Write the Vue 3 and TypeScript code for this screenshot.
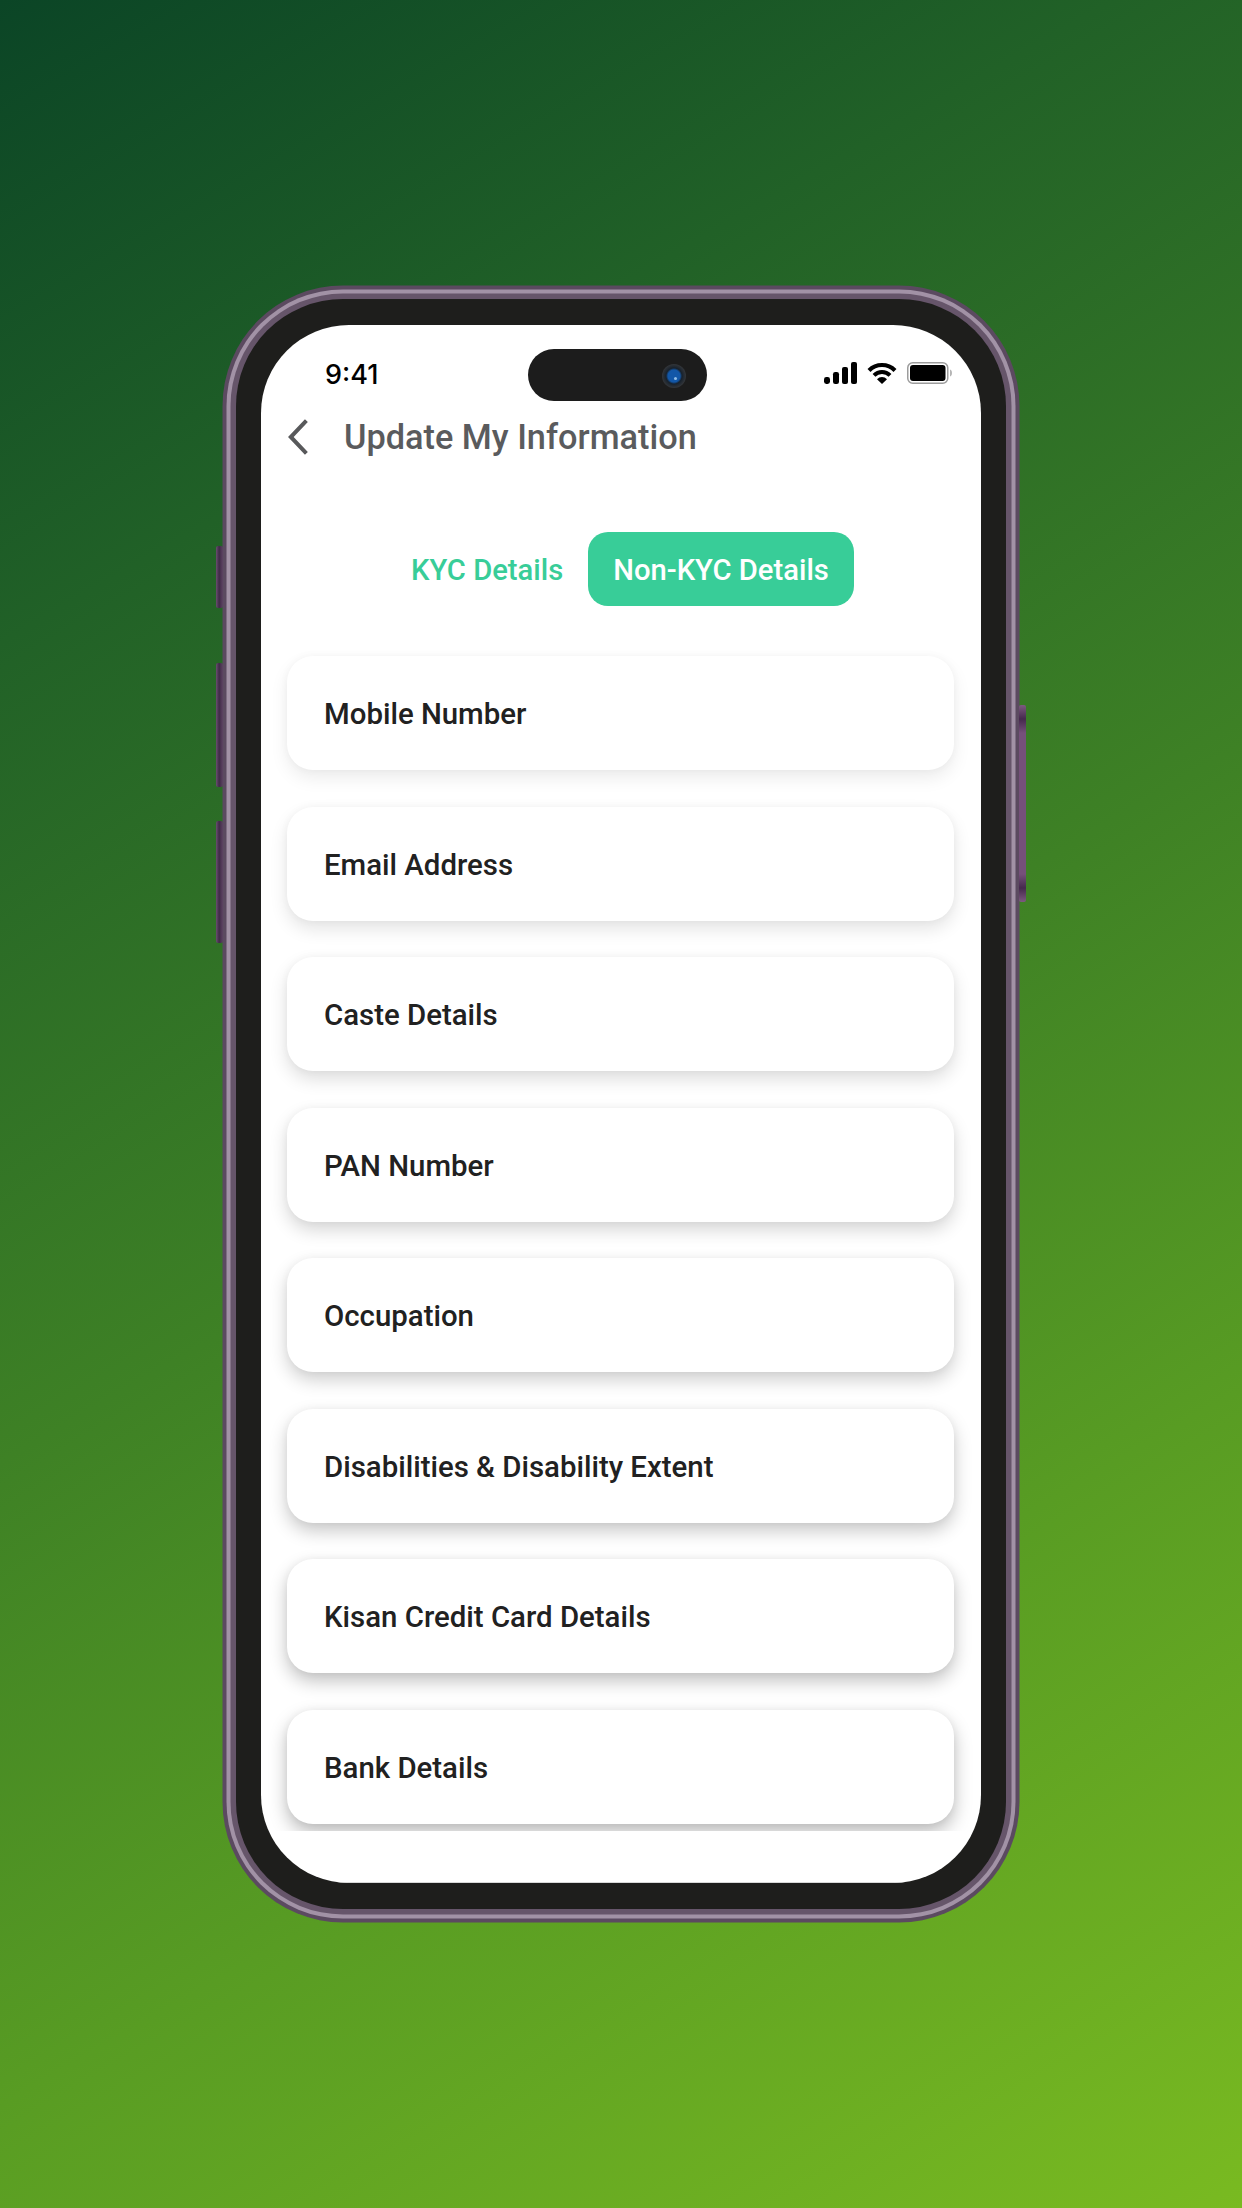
<script setup lang="ts">
const labels: string[] = [
  'Mobile Number',
  'Email Address',
  'Caste Details',
  'PAN Number',
  'Occupation',
  'Disabilities & Disability Extent',
  'Kisan Credit Card Details',
  'Bank Details',
]
function cardShadow(i: number): string {
  const a = (0.08 + i * 0.028).toFixed(3)
  return `0 8px 18px rgba(0,0,0,${a}), 0 0 8px rgba(0,0,0,0.035)`
}
</script>

<template>
  <div class="page">
    <div class="phone">
      <span class="side side-l1"></span>
      <span class="side side-l2"></span>
      <span class="side side-l3"></span>
      <span class="side side-r"></span>
      <div class="screen">
        <div class="island">
          <span class="camera"><span class="lens"></span></span>
        </div>
        <div class="status">
          <span class="time">9:41</span>
          <div class="status-icons">
            <svg class="signal" width="33" height="22" viewBox="0 0 33 22">
              <rect x="0" y="15" width="6" height="7" rx="2.4" />
              <rect x="9" y="10" width="6" height="12" rx="2.2" />
              <rect x="18" y="5" width="6" height="17" rx="2" />
              <rect x="27" y="0" width="6" height="22" rx="2" />
            </svg>
            <svg class="wifi" width="30" height="23" viewBox="0 0 30 23">
              <path d="M2 9.4 A18.4 18.4 0 0 1 28 9.4" fill="none" stroke="#000" stroke-width="4.2" />
              <path d="M7 14.4 A11.4 11.4 0 0 1 23 14.4" fill="none" stroke="#000" stroke-width="4" />
              <path d="M15 23 L10 18.2 A7 7 0 0 1 20 18.2 Z" fill="#000" />
            </svg>
            <svg class="battery" width="45" height="22" viewBox="0 0 45 22">
              <rect x="0.75" y="0.75" width="40" height="20.5" rx="5" fill="#fff" stroke="#9c9c9c" stroke-width="1.5" />
              <rect x="3" y="3" width="35.5" height="16" rx="3" fill="#000" />
              <path d="M43 7.5 C44.4 8 45 9.4 45 11 C45 12.6 44.4 14 43 14.5 Z" fill="#b5b5b5" />
            </svg>
          </div>
        </div>
        <header class="head">
          <svg class="back" width="20" height="36" viewBox="0 0 20 36">
            <path d="M18.4 1.6 L2.8 18 L18.4 34.4" fill="none" stroke="#58595b" stroke-width="4" />
          </svg>
          <h1 class="title">Update My Information</h1>
        </header>
        <div class="tabs">
          <span class="tab">KYC Details</span>
          <span class="tab tab-on">Non-KYC Details</span>
        </div>
        <div class="list">
          <div v-for="(label, i) in labels" :key="label" class="card" :style="{ boxShadow: cardShadow(i) }">
            {{ label }}
          </div>
        </div>
        <div class="foot"></div>
      </div>
    </div>
  </div>
</template>

<style>
html, body { margin: 0; padding: 0; }
</style>

<style scoped>
.page {
  width: 1242px;
  height: 2208px;
  display: flex;
  align-items: center;
  justify-content: center;
  overflow: hidden;
  background: linear-gradient(150deg, #0b4526 0%, #216127 22%, #3e8125 50%, #589c23 72%, #79ba21 100%);
  font-family: Roboto, "Liberation Sans", sans-serif;
}
.phone {
  position: relative;
  box-sizing: border-box;
  width: 770px;
  height: 1610px;
  padding: 26px 25px;
  background: #1e1e1c;
  border-radius: 107px;
  box-shadow: 0 0 0 5.5px #66556a, 0 0 0 9.5px #a292a6, 0 0 0 13.5px #5b4a60;
}
.side {
  position: absolute;
  width: 7px;
  border-radius: 2px;
  background: linear-gradient(90deg, #6a4f70, #3f2a47 45%, #5d4463);
}
.side-l1 { left: -20px; top: 247px; height: 62px; }
.side-l2 { left: -20px; top: 364px; height: 124px; }
.side-l3 { left: -20px; top: 522px; height: 122px; }
.side-r {
  right: -20px;
  top: 406px;
  height: 197px;
  background: linear-gradient(180deg, #7d5a80 0, #45294d 14px, #75507a 28px, #75507a 169px, #45294d 183px, #7d5a80 197px);
}
.screen {
  position: relative;
  box-sizing: border-box;
  width: 720px;
  height: 1558px;
  display: flex;
  flex-direction: column;
  background: #fff;
  border-radius: 88px;
  overflow: hidden;
}
.island {
  position: absolute;
  left: 267px;
  top: 24px;
  width: 179px;
  height: 52px;
  border-radius: 26px;
  background: #1c1c1c;
}
.camera {
  position: absolute;
  left: 134px;
  top: 15px;
  width: 24px;
  height: 24px;
  border-radius: 50%;
  background: radial-gradient(circle at 50% 50%, #1257a8 0 6px, #17212c 8px, #33363a 12px);
}
.lens {
  position: absolute;
  left: 12px;
  top: 13px;
  width: 3px;
  height: 3px;
  border-radius: 50%;
  background: #8fbce6;
}
.status {
  display: flex;
  align-items: center;
  justify-content: space-between;
  height: 27px;
  margin-top: 35px;
  padding: 0 29px 0 64px;
}
.time {
  padding-top: 1px;
  font-family: Inter, "Liberation Sans", sans-serif;
  font-size: 27px;
  font-weight: 500;
  color: #000;
}
.status-icons {
  display: flex;
  align-items: center;
  gap: 10px;
  margin-bottom: 2px;
}
.signal { fill: #000; }
.head {
  display: flex;
  align-items: center;
  gap: 36px;
  height: 60px;
  margin-top: 20px;
  padding-left: 27px;
}
.title {
  margin: 0;
  font-size: 34.3px;
  font-weight: 500;
  color: #5a5b5d;
}
.tabs {
  display: flex;
  align-items: center;
  gap: 25px;
  height: 74px;
  margin-top: 65px;
  padding-left: 150px;
}
.tab {
  padding-top: 2px;
  font-size: 29.2px;
  font-weight: 500;
  color: #38cd98;
}
.tab-on {
  display: flex;
  align-items: center;
  box-sizing: border-box;
  height: 74px;
  padding: 2px 25px 0;
  border-radius: 20px;
  background: #38cd98;
  color: #fff;
}
.list {
  flex: 1;
  min-height: 0;
  overflow: hidden;
  display: flex;
  flex-direction: column;
  gap: 36.5px;
  padding: 50px 27px 0 26px;
}
.card {
  flex: none;
  box-sizing: border-box;
  display: flex;
  align-items: center;
  height: 114px;
  padding: 2px 0 0 37px;
  border-radius: 26px;
  background: #fff;
  font-size: 29.4px;
  font-weight: 500;
  color: #212121;
}
.foot {
  flex: none;
  height: 52px;
  border-bottom: 1px solid #d8d8d8;
  box-sizing: border-box;
}
</style>
